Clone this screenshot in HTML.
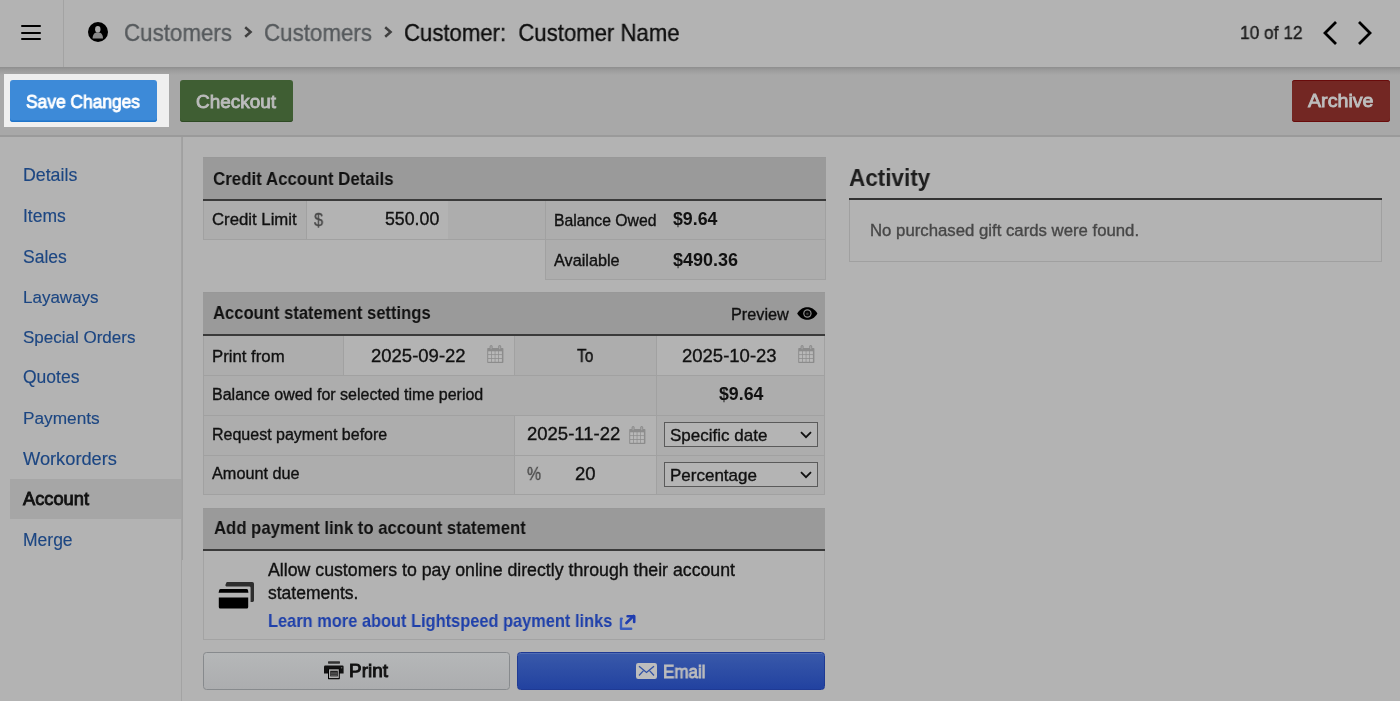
<!DOCTYPE html>
<html><head><meta charset="utf-8"><title>Customer Account</title>
<style>
html,body{margin:0;padding:0;}
body{width:1400px;height:701px;overflow:hidden;position:relative;background:#b3b3b3;font-family:"Liberation Sans",sans-serif;}
.t{position:absolute;white-space:nowrap;will-change:transform;}
.r{position:absolute;}
svg.r{display:block;overflow:visible;}
</style></head><body>
<div class="r" style="left:0px;top:0px;width:1400px;height:67px;background:#b3b3b3"></div>
<div class="r" style="left:20.5px;top:25px;width:20.5px;height:2.3px;background:#000;border-radius:1.2px"></div>
<div class="r" style="left:20.5px;top:31.5px;width:20.5px;height:2.3px;background:#000;border-radius:1.2px"></div>
<div class="r" style="left:20.5px;top:38px;width:20.5px;height:2.3px;background:#000;border-radius:1.2px"></div>
<div class="r" style="left:63px;top:0px;width:1px;height:67px;background:#a3a3a3"></div>
<svg class="r" style="left:88px;top:22.4px" width="20" height="20" viewBox="0 0 20 20">
<circle cx="10" cy="10" r="10" fill="#000"/>
<ellipse cx="9.8" cy="7.2" rx="2.7" ry="3.3" fill="#a9a9a9"/>
<path d="M4.6 16.4 C4.6 12.2 6.8 10.2 9.8 10.2 C12.8 10.2 15 12.2 15 16.4 Z" fill="#8a8a8a"/>
</svg>
<div class="t" style="left:123.6px;top:21.08px;font-size:24px;line-height:24px;color:#565a5d;font-weight:normal;-webkit-text-stroke:0.35px #565a5d;transform:scaleX(0.9309);transform-origin:0 0;">Customers</div>
<div class="t" style="left:263.5px;top:21.08px;font-size:24px;line-height:24px;color:#565a5d;font-weight:normal;-webkit-text-stroke:0.35px #565a5d;transform:scaleX(0.9309);transform-origin:0 0;">Customers</div>
<svg class="r" style="left:244px;top:26px" width="10" height="12" viewBox="0 0 10 12"><polyline points="1.2,1.2 6.6,6 1.2,10.8" fill="none" stroke="#404040" stroke-width="2.5"/></svg>
<svg class="r" style="left:384px;top:26px" width="10" height="12" viewBox="0 0 10 12"><polyline points="1.2,1.2 6.6,6 1.2,10.8" fill="none" stroke="#404040" stroke-width="2.5"/></svg>
<div class="t" style="left:403.7px;top:21.08px;font-size:24px;line-height:24px;color:#0f0f0f;font-weight:normal;-webkit-text-stroke:0.35px #0f0f0f;transform:scaleX(0.9222);transform-origin:0 0;">Customer:&nbsp; Customer Name</div>
<div class="t" style="left:1239.6px;top:23.65px;font-size:18.25px;line-height:18.25px;color:#1c1c1c;font-weight:normal;-webkit-text-stroke:0.35px #1c1c1c;transform:scaleX(0.9491);transform-origin:0 0;">10 of 12</div>
<svg class="r" style="left:1320px;top:20px" width="56" height="26" viewBox="0 0 56 26"><polyline points="16,2 5,13 16,24" fill="none" stroke="#000" stroke-width="2.8"/><polyline points="39,2 50,13 39,24" fill="none" stroke="#000" stroke-width="2.8"/></svg>
<div class="r" style="left:0px;top:67px;width:1400px;height:69px;background:#a8a8a8"></div>
<div class="r" style="left:0px;top:67px;width:1400px;height:8px;background:linear-gradient(#8e8e8e,#9b9b9b 3px,#a8a8a8)"></div>
<div class="r" style="left:0px;top:135px;width:1400px;height:2px;background:#9a9a9a"></div>
<div class="r" style="left:4px;top:74px;width:165px;height:53px;background:#efefef"></div>
<div class="r" style="left:10px;top:80px;width:147px;height:42px;background:#3d8ad8;border-radius:3px;box-shadow:inset 0 -1.5px 0 #1f74c9"></div>
<div class="t" style="left:26.1px;top:92.54px;font-size:18.5px;line-height:18.5px;color:#fff;font-weight:normal;-webkit-text-stroke:0.85px #fff;transform:scaleX(0.9394);transform-origin:0 0;">Save Changes</div>
<div class="r" style="left:180px;top:80px;width:113px;height:42px;background:#3f5e33;border-radius:3px;box-shadow:inset 0 -1px 0 #2e4a24"></div>
<div class="t" style="left:196px;top:92.54px;font-size:18.5px;line-height:18.5px;color:#bcbcbc;font-weight:normal;-webkit-text-stroke:0.85px #bcbcbc;transform:scaleX(1.0237);transform-origin:0 0;">Checkout</div>
<div class="r" style="left:1292px;top:80px;width:98px;height:42px;background:#732723;border-radius:3px;box-shadow:inset 0 1px 0 #690b0b,inset 0 -1px 0 #690b0b"></div>
<div class="t" style="left:1308px;top:92.44px;font-size:18.5px;line-height:18.5px;color:#bdbdbd;font-weight:normal;-webkit-text-stroke:0.85px #bdbdbd;transform:scaleX(1.0618);transform-origin:0 0;">Archive</div>
<div class="r" style="left:0px;top:137px;width:1400px;height:564px;background:#b3b3b3"></div>
<div class="r" style="left:181px;top:137px;width:1px;height:564px;background:#a3a3a3"></div>
<div class="r" style="left:182px;top:137px;width:1px;height:423px;background:#a0a0a0"></div>
<div class="r" style="left:10px;top:479px;width:171px;height:39.5px;background:#a6a6a6"></div>
<div class="t" style="left:23px;top:167.07px;font-size:17.75px;line-height:17.75px;color:#1c4682;font-weight:normal;-webkit-text-stroke:0.15px #1c4682;">Details</div>
<div class="t" style="left:23px;top:207.89px;font-size:17.5px;line-height:17.5px;color:#1c4682;font-weight:normal;-webkit-text-stroke:0.15px #1c4682;">Items</div>
<div class="t" style="left:23px;top:248.59px;font-size:17.5px;line-height:17.5px;color:#1c4682;font-weight:normal;-webkit-text-stroke:0.15px #1c4682;">Sales</div>
<div class="t" style="left:23px;top:288.91px;font-size:17px;line-height:17px;color:#1c4682;font-weight:normal;-webkit-text-stroke:0.15px #1c4682;">Layaways</div>
<div class="t" style="left:23px;top:329.31px;font-size:17px;line-height:17px;color:#1c4682;font-weight:normal;-webkit-text-stroke:0.15px #1c4682;">Special Orders</div>
<div class="t" style="left:23px;top:369.49px;font-size:17.5px;line-height:17.5px;color:#1c4682;font-weight:normal;-webkit-text-stroke:0.15px #1c4682;">Quotes</div>
<div class="t" style="left:23px;top:410.30px;font-size:17.25px;line-height:17.25px;color:#1c4682;font-weight:normal;-webkit-text-stroke:0.15px #1c4682;">Payments</div>
<div class="t" style="left:23px;top:449.85px;font-size:18.25px;line-height:18.25px;color:#1c4682;font-weight:normal;-webkit-text-stroke:0.15px #1c4682;">Workorders</div>
<div class="t" style="left:23px;top:491.39px;font-size:17.5px;line-height:17.5px;color:#111;font-weight:normal;-webkit-text-stroke:0.85px #111;transform:scaleX(1.0438);transform-origin:0 0;">Account</div>
<div class="t" style="left:23px;top:531.89px;font-size:17.5px;line-height:17.5px;color:#1c4682;font-weight:normal;-webkit-text-stroke:0.15px #1c4682;">Merge</div>
<div class="r" style="left:203px;top:157px;width:623px;height:42px;background:#9a9a9a"></div>
<div class="r" style="left:203px;top:157px;width:623px;height:1px;background:#989898"></div>
<div class="r" style="left:203px;top:199px;width:623px;height:2px;background:#3a3a3a"></div>
<div class="t" style="left:213px;top:168.62px;font-size:19px;line-height:19px;color:#111;font-weight:bold;transform:scaleX(0.8890);transform-origin:0 0;">Credit Account Details</div>
<div class="r" style="left:203px;top:201px;width:103px;height:38px;background:#adadad"></div>
<div class="r" style="left:307px;top:201px;width:141px;height:38px;background:#b3b3b3"></div>
<div class="r" style="left:448px;top:201px;width:97px;height:38px;background:#adadad"></div>
<div class="r" style="left:203px;top:239px;width:342px;height:1px;background:#a1a1a1"></div>
<div class="r" style="left:203px;top:201px;width:1px;height:38px;background:#a1a1a1"></div>
<div class="r" style="left:306px;top:201px;width:1px;height:38px;background:#a1a1a1"></div>
<div class="r" style="left:545px;top:201px;width:281px;height:78px;background:#adadad"></div>
<div class="r" style="left:545px;top:201px;width:1px;height:78px;background:#a1a1a1"></div>
<div class="r" style="left:825px;top:201px;width:1px;height:78px;background:#a1a1a1"></div>
<div class="r" style="left:545px;top:239px;width:281px;height:1px;background:#a1a1a1"></div>
<div class="r" style="left:545px;top:279px;width:281px;height:1px;background:#a1a1a1"></div>
<div class="t" style="left:212px;top:212.22px;font-size:16.75px;line-height:16.75px;color:#111;font-weight:normal;-webkit-text-stroke:0.35px #111;">Credit Limit</div>
<div class="t" style="left:314px;top:210.42px;font-size:19px;line-height:19px;color:#484848;font-weight:normal;-webkit-text-stroke:0.35px #484848;transform:scaleX(0.8518);transform-origin:0 0;">$</div>
<div class="t" style="left:385.4px;top:211.27px;font-size:17.75px;line-height:17.75px;color:#111;font-weight:normal;-webkit-text-stroke:0.35px #111;">550.00</div>
<div class="t" style="left:553.5px;top:212.87px;font-size:15.75px;line-height:15.75px;color:#111;font-weight:normal;-webkit-text-stroke:0.35px #111;">Balance Owed</div>
<div class="t" style="left:673px;top:211.17px;font-size:17.75px;line-height:17.75px;color:#111;font-weight:bold;">$9.64</div>
<div class="t" style="left:553.5px;top:252.14px;font-size:16.25px;line-height:16.25px;color:#111;font-weight:normal;-webkit-text-stroke:0.35px #111;">Available</div>
<div class="t" style="left:673px;top:250.86px;font-size:18px;line-height:18px;color:#111;font-weight:bold;">$490.36</div>
<div class="t" style="left:849px;top:166.40px;font-size:23.75px;line-height:23.75px;color:#1e1e1e;font-weight:bold;transform:scaleX(0.9477);transform-origin:0 0;">Activity</div>
<div class="r" style="left:849px;top:198px;width:533px;height:2px;background:#333"></div>
<div class="r" style="left:849px;top:200px;width:533px;height:62px;box-sizing:border-box;border:1px solid #a0a0a0;border-top:0"></div>
<div class="t" style="left:869.6px;top:223.12px;font-size:16.75px;line-height:16.75px;color:#474747;font-weight:normal;-webkit-text-stroke:0.35px #474747;">No purchased gift cards were found.</div>
<div class="r" style="left:203px;top:292px;width:622px;height:42px;background:#9a9a9a"></div>
<div class="r" style="left:203px;top:292px;width:622px;height:1px;background:#989898"></div>
<div class="r" style="left:203px;top:334px;width:622px;height:2px;background:#3a3a3a"></div>
<div class="t" style="left:213.4px;top:303.83px;font-size:18.75px;line-height:18.75px;color:#111;font-weight:bold;transform:scaleX(0.8851);transform-origin:0 0;">Account statement settings</div>
<div class="t" style="left:731px;top:305.94px;font-size:16.25px;line-height:16.25px;color:#111;font-weight:normal;-webkit-text-stroke:0.35px #111;">Preview</div>
<svg class="r" style="left:797px;top:307px" width="21" height="13" viewBox="0 0 21 13"><path d="M0.2 6.5 C3.2 1.6 6.8 0.2 10.3 0.2 C13.8 0.2 17.4 1.6 20.4 6.5 C17.4 11.4 13.8 12.8 10.3 12.8 C6.8 12.8 3.2 11.4 0.2 6.5Z" fill="#000"/><circle cx="10.4" cy="6.5" r="4.2" fill="#8e8e8e"/><circle cx="10.4" cy="6.5" r="3" fill="#050505"/><circle cx="10.4" cy="6.8" r="1.3" fill="#3a3a3a"/></svg>
<div class="r" style="left:203px;top:336px;width:622px;height:39px;background:#adadad"></div>
<div class="r" style="left:203px;top:375px;width:622px;height:1px;background:#a1a1a1"></div>
<div class="r" style="left:203px;top:376px;width:622px;height:39px;background:#adadad"></div>
<div class="r" style="left:203px;top:415px;width:622px;height:1px;background:#a1a1a1"></div>
<div class="r" style="left:203px;top:416px;width:622px;height:39px;background:#adadad"></div>
<div class="r" style="left:203px;top:455px;width:622px;height:1px;background:#a1a1a1"></div>
<div class="r" style="left:203px;top:456px;width:622px;height:38px;background:#adadad"></div>
<div class="r" style="left:203px;top:494px;width:622px;height:1px;background:#a1a1a1"></div>
<div class="r" style="left:203px;top:336px;width:1px;height:158px;background:#a1a1a1"></div>
<div class="r" style="left:824px;top:336px;width:1px;height:158px;background:#a1a1a1"></div>
<div class="r" style="left:344px;top:336px;width:170px;height:39px;background:#b3b3b3"></div>
<div class="r" style="left:657px;top:336px;width:167px;height:39px;background:#b3b3b3"></div>
<div class="r" style="left:343px;top:336px;width:1px;height:39px;background:#a1a1a1"></div>
<div class="r" style="left:514px;top:336px;width:1px;height:39px;background:#a1a1a1"></div>
<div class="r" style="left:656px;top:336px;width:1px;height:158px;background:#a1a1a1"></div>
<div class="r" style="left:515px;top:416px;width:141px;height:78px;background:#b3b3b3"></div>
<div class="r" style="left:514px;top:416px;width:1px;height:78px;background:#a1a1a1"></div>
<div class="r" style="left:515px;top:455px;width:141px;height:1px;background:#a1a1a1"></div>
<div class="t" style="left:212.2px;top:348.52px;font-size:16.75px;line-height:16.75px;color:#111;font-weight:normal;-webkit-text-stroke:0.35px #111;">Print from</div>
<div class="t" style="left:370.6px;top:347.34px;font-size:18.5px;line-height:18.5px;color:#111;font-weight:normal;-webkit-text-stroke:0.35px #111;">2025-09-22</div>
<svg class="r" style="left:487px;top:345px" width="17" height="18" viewBox="0 0 17 18"><rect x="0.2" y="3" width="16.2" height="15" rx="0.8" fill="#8c8c8c"/><rect x="1.20" y="6.30" width="2.9" height="3.0" fill="#b8b8b8"/><rect x="1.20" y="10.05" width="2.9" height="3.0" fill="#b8b8b8"/><rect x="1.20" y="13.80" width="2.9" height="3.0" fill="#b8b8b8"/><rect x="4.80" y="6.30" width="2.9" height="3.0" fill="#b8b8b8"/><rect x="4.80" y="10.05" width="2.9" height="3.0" fill="#b8b8b8"/><rect x="4.80" y="13.80" width="2.9" height="3.0" fill="#b8b8b8"/><rect x="8.40" y="6.30" width="2.9" height="3.0" fill="#b8b8b8"/><rect x="8.40" y="10.05" width="2.9" height="3.0" fill="#b8b8b8"/><rect x="8.40" y="13.80" width="2.9" height="3.0" fill="#b8b8b8"/><rect x="12.00" y="6.30" width="2.9" height="3.0" fill="#b8b8b8"/><rect x="12.00" y="10.05" width="2.9" height="3.0" fill="#b8b8b8"/><rect x="12.00" y="13.80" width="2.9" height="3.0" fill="#b8b8b8"/><rect x="2.6" y="0" width="3" height="5.2" rx="1.5" fill="#8c8c8c"/><rect x="11.2" y="0" width="3" height="5.2" rx="1.5" fill="#8c8c8c"/><rect x="3.6" y="1.2" width="1" height="3" fill="#a8a8a8"/><rect x="12.2" y="1.2" width="1" height="3" fill="#a8a8a8"/></svg>
<div class="t" style="left:577px;top:348.19px;font-size:17.5px;line-height:17.5px;color:#111;font-weight:normal;-webkit-text-stroke:0.35px #111;transform:scaleX(0.8874);transform-origin:0 0;">To</div>
<div class="t" style="left:682.4px;top:347.34px;font-size:18.5px;line-height:18.5px;color:#111;font-weight:normal;-webkit-text-stroke:0.35px #111;">2025-10-23</div>
<svg class="r" style="left:798px;top:345px" width="17" height="18" viewBox="0 0 17 18"><rect x="0.2" y="3" width="16.2" height="15" rx="0.8" fill="#8c8c8c"/><rect x="1.20" y="6.30" width="2.9" height="3.0" fill="#b8b8b8"/><rect x="1.20" y="10.05" width="2.9" height="3.0" fill="#b8b8b8"/><rect x="1.20" y="13.80" width="2.9" height="3.0" fill="#b8b8b8"/><rect x="4.80" y="6.30" width="2.9" height="3.0" fill="#b8b8b8"/><rect x="4.80" y="10.05" width="2.9" height="3.0" fill="#b8b8b8"/><rect x="4.80" y="13.80" width="2.9" height="3.0" fill="#b8b8b8"/><rect x="8.40" y="6.30" width="2.9" height="3.0" fill="#b8b8b8"/><rect x="8.40" y="10.05" width="2.9" height="3.0" fill="#b8b8b8"/><rect x="8.40" y="13.80" width="2.9" height="3.0" fill="#b8b8b8"/><rect x="12.00" y="6.30" width="2.9" height="3.0" fill="#b8b8b8"/><rect x="12.00" y="10.05" width="2.9" height="3.0" fill="#b8b8b8"/><rect x="12.00" y="13.80" width="2.9" height="3.0" fill="#b8b8b8"/><rect x="2.6" y="0" width="3" height="5.2" rx="1.5" fill="#8c8c8c"/><rect x="11.2" y="0" width="3" height="5.2" rx="1.5" fill="#8c8c8c"/><rect x="3.6" y="1.2" width="1" height="3" fill="#a8a8a8"/><rect x="12.2" y="1.2" width="1" height="3" fill="#a8a8a8"/></svg>
<div class="t" style="left:212.4px;top:387.36px;font-size:16px;line-height:16px;color:#111;font-weight:normal;-webkit-text-stroke:0.35px #111;">Balance owed for selected time period</div>
<div class="t" style="left:718.6px;top:385.97px;font-size:17.75px;line-height:17.75px;color:#111;font-weight:bold;">$9.64</div>
<div class="t" style="left:212.4px;top:426.76px;font-size:16px;line-height:16px;color:#111;font-weight:normal;-webkit-text-stroke:0.35px #111;">Request payment before</div>
<div class="t" style="left:526.6px;top:425.44px;font-size:18.5px;line-height:18.5px;color:#111;font-weight:normal;-webkit-text-stroke:0.35px #111;">2025-11-22</div>
<svg class="r" style="left:629px;top:426px" width="17" height="18" viewBox="0 0 17 18"><rect x="0.2" y="3" width="16.2" height="15" rx="0.8" fill="#8c8c8c"/><rect x="1.20" y="6.30" width="2.9" height="3.0" fill="#b8b8b8"/><rect x="1.20" y="10.05" width="2.9" height="3.0" fill="#b8b8b8"/><rect x="1.20" y="13.80" width="2.9" height="3.0" fill="#b8b8b8"/><rect x="4.80" y="6.30" width="2.9" height="3.0" fill="#b8b8b8"/><rect x="4.80" y="10.05" width="2.9" height="3.0" fill="#b8b8b8"/><rect x="4.80" y="13.80" width="2.9" height="3.0" fill="#b8b8b8"/><rect x="8.40" y="6.30" width="2.9" height="3.0" fill="#b8b8b8"/><rect x="8.40" y="10.05" width="2.9" height="3.0" fill="#b8b8b8"/><rect x="8.40" y="13.80" width="2.9" height="3.0" fill="#b8b8b8"/><rect x="12.00" y="6.30" width="2.9" height="3.0" fill="#b8b8b8"/><rect x="12.00" y="10.05" width="2.9" height="3.0" fill="#b8b8b8"/><rect x="12.00" y="13.80" width="2.9" height="3.0" fill="#b8b8b8"/><rect x="2.6" y="0" width="3" height="5.2" rx="1.5" fill="#8c8c8c"/><rect x="11.2" y="0" width="3" height="5.2" rx="1.5" fill="#8c8c8c"/><rect x="3.6" y="1.2" width="1" height="3" fill="#a8a8a8"/><rect x="12.2" y="1.2" width="1" height="3" fill="#a8a8a8"/></svg>
<div class="t" style="left:212.4px;top:464.74px;font-size:16.25px;line-height:16.25px;color:#111;font-weight:normal;-webkit-text-stroke:0.35px #111;">Amount due</div>
<div class="t" style="left:526.6px;top:464.64px;font-size:18.5px;line-height:18.5px;color:#4a4a4a;font-weight:normal;-webkit-text-stroke:0.35px #4a4a4a;transform:scaleX(0.8510);transform-origin:0 0;">%</div>
<div class="t" style="left:575px;top:464.54px;font-size:18.5px;line-height:18.5px;color:#111;font-weight:normal;-webkit-text-stroke:0.35px #111;">20</div>
<div class="r" style="left:664px;top:422px;width:154px;height:25px;box-sizing:border-box;border:1px solid #5a5a5a;background:#b4b4b4"></div><div class="t" style="left:670.4px;top:426.51px;font-size:17px;line-height:17px;color:#111;font-weight:normal;-webkit-text-stroke:0.35px #111;">Specific date</div><svg class="r" style="left:800px;top:431px" width="12" height="8" viewBox="0 0 12 8"><polyline points="1,1.2 6,6.2 11,1.2" fill="none" stroke="#111" stroke-width="1.8"/></svg>
<div class="r" style="left:664px;top:462px;width:154px;height:25px;box-sizing:border-box;border:1px solid #5a5a5a;background:#b4b4b4"></div><div class="t" style="left:670.4px;top:466.51px;font-size:17px;line-height:17px;color:#111;font-weight:normal;-webkit-text-stroke:0.35px #111;">Percentage</div><svg class="r" style="left:800px;top:471px" width="12" height="8" viewBox="0 0 12 8"><polyline points="1,1.2 6,6.2 11,1.2" fill="none" stroke="#111" stroke-width="1.8"/></svg>
<div class="r" style="left:203px;top:508px;width:622px;height:41px;background:#9a9a9a"></div>
<div class="r" style="left:203px;top:508px;width:622px;height:1px;background:#989898"></div>
<div class="r" style="left:203px;top:549px;width:622px;height:2px;background:#3a3a3a"></div>
<div class="t" style="left:213.6px;top:519.04px;font-size:18.5px;line-height:18.5px;color:#111;font-weight:bold;transform:scaleX(0.9025);transform-origin:0 0;">Add payment link to account statement</div>
<div class="r" style="left:203px;top:551px;width:622px;height:89px;box-sizing:border-box;border:1px solid #a3a3a3;border-top:0"></div>
<svg class="r" style="left:219px;top:582px" width="36" height="27" viewBox="0 0 36 27"><path d="M8.2 0 H33.2 a1.8 1.8 0 0 1 1.8 1.8 V18.6 a1.4 1.4 0 0 1 -1.4 1.4 H31.6 V5.8 a1.4 1.4 0 0 0 -1.4 -1.4 H7.6 a1.2 1.2 0 0 1 -1 -1.9 L7.2 1 a1.2 1.2 0 0 1 1 -1Z" fill="#2e2e2e"/><path d="M1.6 7 H27.6 a1.6 1.6 0 0 1 1.4 1 L29.4 10.8 H-0.4 L0.2 8 a1.6 1.6 0 0 1 1.4 -1Z" fill="#000"/><path d="M-0.2 15.6 H29.2 V25 a1.5 1.5 0 0 1 -1.5 1.5 H1.3 a1.5 1.5 0 0 1 -1.5 -1.5Z" fill="#000"/></svg>
<div class="t" style="left:267.7px;top:562.19px;font-size:17.5px;line-height:17.5px;color:#111;font-weight:normal;-webkit-text-stroke:0.35px #111;transform:scaleX(1.0129);transform-origin:0 0;">Allow customers to pay online directly through their account</div>
<div class="t" style="left:267.7px;top:584.69px;font-size:17.5px;line-height:17.5px;color:#111;font-weight:normal;-webkit-text-stroke:0.35px #111;">statements.</div>
<div class="t" style="left:268.4px;top:612.04px;font-size:18.5px;line-height:18.5px;color:#1f40aa;font-weight:bold;transform:scaleX(0.8861);transform-origin:0 0;">Learn more about Lightspeed payment links</div>
<svg class="r" style="left:614px;top:608px" width="28" height="28" viewBox="0 0 28 28"><path d="M7.8 10.6 H7 V20.8 H17.2" fill="none" stroke="#3a5cbd" stroke-width="2.4" stroke-linecap="round" stroke-linejoin="round"/><path d="M12.4 15 L19.6 7.8" fill="none" stroke="#1f3db0" stroke-width="2.6" stroke-linecap="round"/><path d="M13.6 8.2 H20.2 V14" fill="none" stroke="#1f3db0" stroke-width="2.6" stroke-linecap="round" stroke-linejoin="round"/></svg>
<div class="r" style="left:203px;top:652px;width:307px;height:38px;box-sizing:border-box;border:1px solid #878a8d;border-radius:3.5px;background:linear-gradient(#b5b7b8,#acadaf)"></div>
<svg class="r" style="left:318px;top:656px" width="30" height="28" viewBox="0 0 30 28"><rect x="10" y="5.3" width="12" height="2.4" rx="0.6" fill="#333"/><path d="M7.2 9.6 H24.4 a1.2 1.2 0 0 1 1.2 1.2 V17.6 H6 V10.8 a1.2 1.2 0 0 1 1.2 -1.2Z" fill="#111"/><rect x="10" y="12.8" width="11.8" height="10.4" rx="0.6" fill="#000"/><rect x="11" y="13.3" width="9.8" height="8.8" fill="#b0b0b0"/><rect x="12.2" y="14.8" width="7.6" height="5.6" fill="#222"/><rect x="13" y="16.6" width="6" height="0.9" fill="#777"/><rect x="13" y="18.6" width="6" height="1.1" fill="#666"/><circle cx="23.6" cy="11.8" r="0.8" fill="#666"/></svg>
<div class="t" style="left:349.3px;top:663.49px;font-size:17.5px;line-height:17.5px;color:#111;font-weight:normal;-webkit-text-stroke:0.85px #111;transform:scaleX(1.0839);transform-origin:0 0;">Print</div>
<div class="r" style="left:517px;top:652px;width:308px;height:38px;box-sizing:border-box;border:1px solid #1f3a94;border-radius:3.5px;background:linear-gradient(#3959aa,#2242a0);box-shadow:inset 0 1px 0 rgba(255,255,255,0.12)"></div>
<svg class="r" style="left:636px;top:662.5px" width="21" height="16" viewBox="0 0 21 16"><rect x="0" y="0" width="21" height="16" rx="2.2" fill="#bdbdbd"/><polyline points="3,3.2 10.5,9.5 18,3.2" fill="none" stroke="#3050a5" stroke-width="1.3"/><line x1="3" y1="12.5" x2="7.5" y2="7.6" stroke="#3050a5" stroke-width="1.2"/><line x1="18" y1="12.5" x2="13.5" y2="7.6" stroke="#3050a5" stroke-width="1.2"/></svg>
<div class="t" style="left:662.9px;top:663.79px;font-size:17.5px;line-height:17.5px;color:#bdbdbd;font-weight:normal;-webkit-text-stroke:0.85px #bdbdbd;transform:scaleX(0.9712);transform-origin:0 0;">Email</div>
</body></html>
